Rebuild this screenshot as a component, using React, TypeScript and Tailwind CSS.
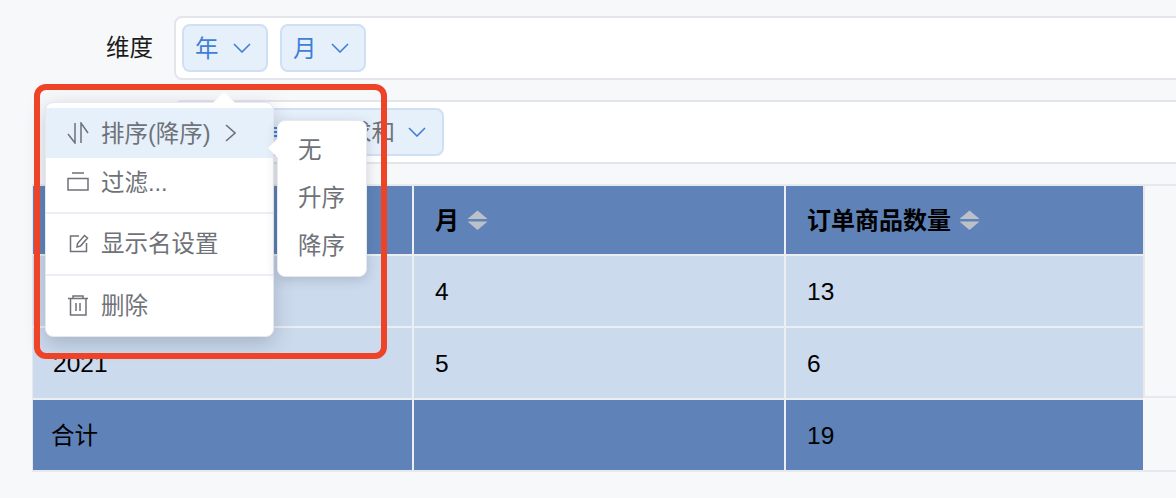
import React from 'react';

const Chevron = () => (
  <svg width="18" height="10" viewBox="0 0 18 10" fill="none" stroke="#3f7fd8" strokeWidth="1.6" className="shrink-0">
    <path d="M1 1 L9 9 L17 1" />
  </svg>
);

const Chip = ({ label }: { label: string }) => (
  <div className="h-12 w-[86px] flex items-center gap-[14px] pl-[11px] rounded-lg border-2 border-[#cfe0f5] bg-[#e6f0fb]">
    <span className="pt-[4px] text-[23.5px] text-[#3f7fd8]">{label}</span>
    <Chevron />
  </div>
);

const SortIcon = () => (
  <svg width="21" height="20" viewBox="0 0 21 20" className="ml-[8px] shrink-0">
    <path d="M10.5 0.5 L20 8.5 Q20.5 9 19.5 9 H1.5 Q0.5 9 1 8.5 Z" fill="#bcc0c8" />
    <path d="M1.5 11.5 H19.5 Q20.5 11.5 20 12 L10.5 20 L1 12 Q0.5 11.5 1.5 11.5 Z" fill="#bcc0c8" />
  </svg>
);

const HeadCell = ({ label }: { label: string }) => (
  <div className="h-[68px] flex items-center pl-[21px] bg-[#5f83b8]">
    <span className="pt-[2px] text-[24px] font-semibold text-black">{label}</span>
    <SortIcon />
  </div>
);

const Cell = ({ children, className = '' }: { children?: React.ReactNode; className?: string }) => (
  <div className={`h-[70px] flex items-center text-black ${className}`}>{children}</div>
);

const Num = ({ value }: { value: string }) => <span className="pt-[3px] text-[24.5px]">{value}</span>;

const MenuIcon = ({ children }: { children: React.ReactNode }) => (
  <svg width="22" height="22" viewBox="0 0 22 22" fill="none" stroke="#6f7278" strokeWidth="1.5" className="shrink-0">
    {children}
  </svg>
);

export default function App() {
  return (
    <div className='relative w-[1176px] h-[498px] overflow-hidden bg-[#f7f8fa] font-["Liberation_Sans","Noto_Sans_CJK_SC",sans-serif]'>
      <div className="flex flex-col pt-[16px]">
        <div className="flex items-center">
          <div className="w-[153px] shrink-0 pt-[2px] text-right text-[23.5px] text-[#1b1b1b]">维度</div>
          <div className="ml-[21px] w-[1020px] shrink-0 h-[64px] flex items-center gap-[12px] pl-[6px] bg-white border-2 border-[#e3e5ea] rounded-lg">
            <Chip label="年" />
            <Chip label="月" />
          </div>
        </div>
        <div className="flex items-center mt-[20px]">
          <div className="w-[153px] shrink-0" />
          <div className="ml-[21px] w-[1020px] shrink-0 h-[64px] flex items-center pl-[6px] bg-white border-2 border-[#e3e5ea] rounded-lg">
            <div className="h-12 w-[262px] flex items-center justify-between pr-[16px] rounded-lg border-2 border-[#cfe0f5] bg-[#e6f0fb]">
              {/* sliver of the blue metric name, the rest sits under the submenu */}
              <div className="ml-[90px] flex flex-col gap-[2px]">
                <div className="w-[3px] h-[2px] bg-[#3f7fd8]" />
                <div className="w-[3px] h-[2px] bg-[#3f7fd8]" />
                <div className="w-[3px] h-[2px] bg-[#3f7fd8]" />
              </div>
              <div className="flex items-center gap-[13px]">
                <span className="pt-[4px] text-[23.5px] text-[#6f7278]">求和</span>
                <Chevron />
              </div>
            </div>
          </div>
        </div>

        <div className="mt-[20px] ml-[32px] flex border-y-2 border-l border-[#e8e9ed]">
          <div className="w-[1110px] shrink-0 grid grid-cols-[379px_370px_357px] gap-[2px] bg-[#eceef2]">
            <HeadCell label="年" />
            <HeadCell label="月" />
            <HeadCell label="订单商品数量" />
            <Cell className="pl-[20px] bg-[#ccdaed]"><Num value="2021" /></Cell>
            <Cell className="pl-[21px] bg-[#ccdaed]"><Num value="4" /></Cell>
            <Cell className="pl-[21px] bg-[#ccdaed]"><Num value="13" /></Cell>
            <Cell className="pl-[20px] bg-[#ccdaed]"><Num value="2021" /></Cell>
            <Cell className="pl-[21px] bg-[#ccdaed]"><Num value="5" /></Cell>
            <Cell className="pl-[21px] bg-[#ccdaed]"><Num value="6" /></Cell>
            <Cell className="pl-[18px] bg-[#5f83b8]"><span className="pt-[4px] text-[23.5px]">合计</span></Cell>
            <Cell className="bg-[#5f83b8]" />
            <Cell className="pl-[21px] bg-[#5f83b8]"><Num value="19" /></Cell>
          </div>
          <div className="flex-1 flex flex-col">
            <div className="h-[212px] border-l-2 border-b-2 border-[#e8e9ed]" />
          </div>
        </div>
      </div>

      {/* context menu */}
      <div className="absolute left-[45px] top-[102px] w-[229px] h-[235px] bg-white rounded-lg border border-[#e6e8ee] shadow-[0_6px_20px_rgba(50,60,85,0.25)] text-[23.5px] text-[#6f7278]">
        <div className="absolute left-[170px] top-[-8px] w-[16px] h-[16px] rotate-45 bg-white" />
        <div className="relative mt-[5px] h-[50px] flex items-center pl-[21px] gap-[12px] bg-[#e6f0fb]">
          <MenuIcon>
            <path d="M8 1 V21 L1 12 M14 21 V1 L21 11" />
          </MenuIcon>
          <span className="pt-[4px]">排序(降序)</span>
          <svg width="11" height="18" viewBox="0 0 11 18" fill="none" stroke="#6f7278" strokeWidth="1.6" className="ml-[2px] shrink-0">
            <path d="M1 1 L10 9 L1 17" />
          </svg>
        </div>
        <div className="h-[50px] flex items-center pl-[21px] gap-[12px]">
          <MenuIcon>
            <path d="M5 1 H17 M1 6.5 H21 V18 H1 Z" />
          </MenuIcon>
          <span className="pt-[2px]">过滤...</span>
        </div>
        <div className="mt-[4px] border-t-2 border-[#eceef4] h-[62px] flex items-center pl-[21px] gap-[12px]">
          <MenuIcon>
            <path d="M12 3 H3.5 V18.5 H19.5 V10 M10 14 L10.5 10.5 L17.5 2.5 L20.5 5 L13.5 13 Z" />
          </MenuIcon>
          <span className="pt-[2px]">显示名设置</span>
        </div>
        <div className="border-t-2 border-[#eceef4] h-[62px] flex items-center pl-[21px] gap-[12px]">
          <MenuIcon>
            <path d="M1 3.5 H21 M6 3.5 V1 H16 V3.5 M3.5 3.5 V20 H19 V3.5 M9 8 V16 M13 8 V16" />
          </MenuIcon>
          <span className="pt-[2px]">删除</span>
        </div>
      </div>

      {/* submenu */}
      <div className="absolute left-[277px] top-[120px] w-[90px] h-[157px] bg-white rounded-lg border border-[#e6e8ee] shadow-[0_3px_12px_rgba(50,60,85,0.2)] text-[23.5px] text-[#6f7278] flex flex-col pl-[20px] pt-[6px]">
        <div className="absolute left-[-7px] top-[20px] w-[14px] h-[14px] rotate-45 bg-white" />
        <div className="relative h-[48px] flex items-center">无</div>
        <div className="relative h-[48px] flex items-center">升序</div>
        <div className="relative h-[48px] flex items-center">降序</div>
      </div>

      {/* red annotation */}
      <div className="absolute left-[34px] top-[84px] w-[353px] h-[275px] border-[6px] border-[#ee4327] rounded-[12px]" />
    </div>
  );
}
